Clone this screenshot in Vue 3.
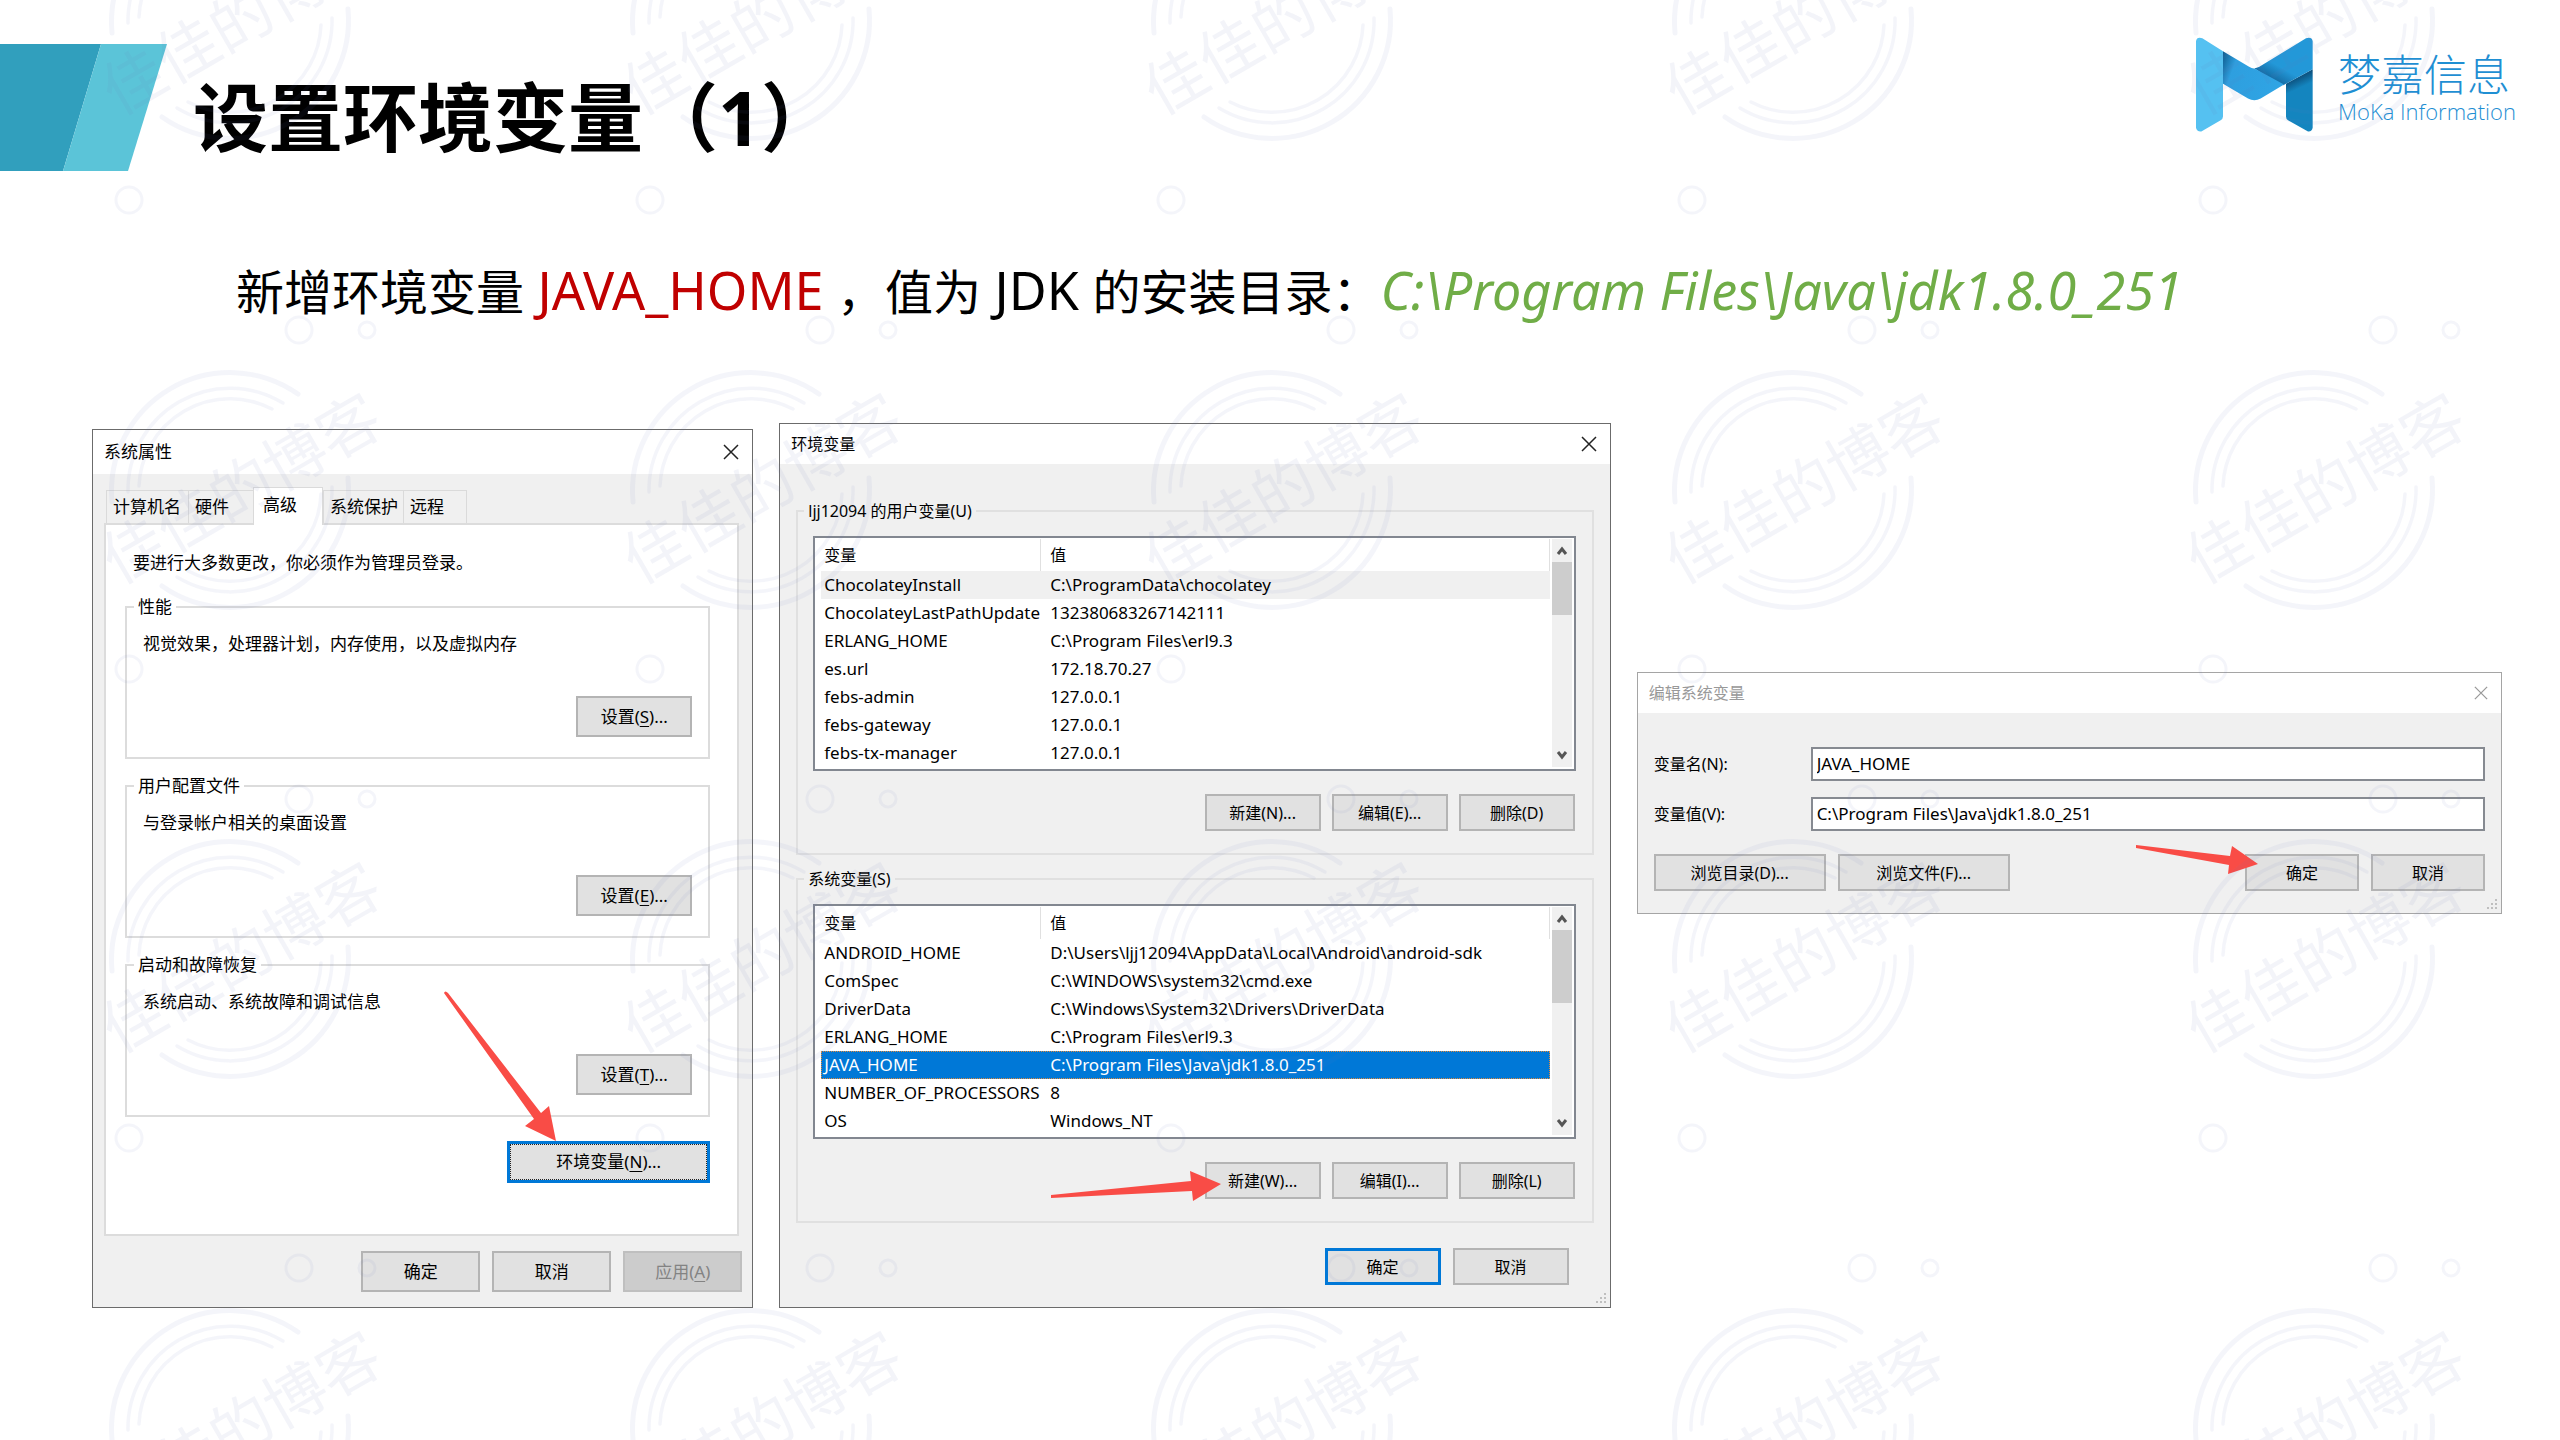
<script setup>
const tabs = [
  { name: '计算机名', width: 82 },
  { name: '硬件', width: 65 },
  { name: '高级', width: 70, active: true },
  { name: '系统保护', width: 80 },
  { name: '远程', width: 64 },
]

const groups = [
  { title: '性能', text: '视觉效果，处理器计划，内存使用，以及虚拟内存', key: 'S' },
  { title: '用户配置文件', text: '与登录帐户相关的桌面设置', key: 'E' },
  { title: '启动和故障恢复', text: '系统启动、系统故障和调试信息', key: 'T' },
]

const lists = [
  {
    title: 'ljj12094 的用户变量(U)',
    thumb: 53,
    highlighted: 'ChocolateyInstall',
    rows: [
      ['ChocolateyInstall', 'C:\\ProgramData\\chocolatey'],
      ['ChocolateyLastPathUpdate', '132380683267142111'],
      ['ERLANG_HOME', 'C:\\Program Files\\erl9.3'],
      ['es.url', '172.18.70.27'],
      ['febs-admin', '127.0.0.1'],
      ['febs-gateway', '127.0.0.1'],
      ['febs-tx-manager', '127.0.0.1'],
    ],
    buttons: ['新建(N)...', '编辑(E)...', '删除(D)'],
  },
  {
    title: '系统变量(S)',
    thumb: 73,
    selected: 'JAVA_HOME',
    arrow: true,
    rows: [
      ['ANDROID_HOME', 'D:\\Users\\ljj12094\\AppData\\Local\\Android\\android-sdk'],
      ['ComSpec', 'C:\\WINDOWS\\system32\\cmd.exe'],
      ['DriverData', 'C:\\Windows\\System32\\Drivers\\DriverData'],
      ['ERLANG_HOME', 'C:\\Program Files\\erl9.3'],
      ['JAVA_HOME', 'C:\\Program Files\\Java\\jdk1.8.0_251'],
      ['NUMBER_OF_PROCESSORS', '8'],
      ['OS', 'Windows_NT'],
    ],
    buttons: ['新建(W)...', '编辑(I)...', '删除(L)'],
  },
]
</script>

<template>
  <main class="slide">
    <header class="head">
      <svg class="ribbon" width="167" height="128" viewBox="0 0 167 128" aria-hidden="true">
        <path d="M0 0H101L63 127H0Z" fill="#319fbd" />
        <path d="M101 0H167L128 127H63Z" fill="#5bc4d8" />
      </svg>
      <h1 class="title">设置环境变量（1）</h1>
      <div class="brand">
        <svg class="mark" width="117" height="95" viewBox="168 112 351 284" aria-hidden="true">
          <defs>
            <linearGradient id="shadeLeft" x1="0" x2="1" y1="0" y2="0.3">
              <stop offset="0" stop-color="#0e5a8c" />
              <stop offset="0.25" stop-color="#2e9fdf" />
              <stop offset="1" stop-color="#2fa4e4" />
            </linearGradient>
            <linearGradient id="shadeMid" gradientUnits="userSpaceOnUse" x1="375" y1="235" x2="400" y2="190">
              <stop offset="0" stop-color="#12649b" />
              <stop offset="1" stop-color="#2398d8" />
            </linearGradient>
            <linearGradient id="shadeRight" gradientUnits="userSpaceOnUse" x1="470" y1="232" x2="484" y2="262">
              <stop offset="0" stop-color="#0c4f7c" />
              <stop offset="1" stop-color="#1485bf" />
            </linearGradient>
          </defs>
          <path d="M438 252L518 208V384Q516 396 504 395L444 361Q438 358 438 350Z" fill="url(#shadeRight)" />
          <path d="M343 205Q350 205 358 201L498 115Q516 110 518 124V208L430 256L400 245Z" fill="url(#shadeMid)" />
          <path d="M249 154L326 200Q334 205 345 207L432 254L362 296Q343 307 324 296L249 252Z" fill="url(#shadeLeft)" />
          <path d="M168 124Q170 110 187 115L249 154V350Q249 357 242 361L184 395Q170 396 168 384Z" fill="#55c1f1" />
        </svg>
        <div class="brand-text">
          <span class="brand-cn">梦嘉信息</span>
          <span class="brand-en">MoKa Information</span>
        </div>
      </div>
    </header>

    <p class="lead">新增环境变量<span class="latin red"> JAVA_HOME </span>，值为<span class="latin"> JDK </span>的安装目录：<em class="latin green">C:\Program Files\Java\jdk1.8.0_251</em></p>

    <div class="windows">
      <section class="window props">
        <div class="bar">
          <span>系统属性</span>
          <button class="close" aria-label="关闭"><svg width="16" height="16" viewBox="0 0 16 16"><path d="M1 1L15 15M15 1L1 15" /></svg></button>
        </div>
        <div class="tabs" role="tablist">
          <button
            v-for="t in tabs"
            :key="t.name"
            class="tab"
            :class="{ active: t.active }"
            role="tab"
            :style="{ width: t.width + 'px' }"
          >{{ t.name }}</button>
        </div>
        <div class="panel">
          <p class="note">要进行大多数更改，你必须作为管理员登录。</p>
          <fieldset v-for="g in groups" :key="g.title" class="group">
            <legend>{{ g.title }}</legend>
            <p>{{ g.text }}</p>
            <button class="btn">设置(<u>{{ g.key }}</u>)...</button>
          </fieldset>
          <div class="env">
            <button class="btn focus">环境变量(<u>N</u>)...</button>
            <svg class="arrow arrow-env" width="116" height="154" viewBox="0 0 116 154" aria-hidden="true">
              <path d="M2 4Q3 1 6 4L99 124L107 117L114 152L83 137L92 130Z" />
            </svg>
          </div>
        </div>
        <div class="actions">
          <button class="btn">确定</button>
          <button class="btn">取消</button>
          <button class="btn" disabled>应用(<u>A</u>)</button>
        </div>
      </section>

      <section class="window vars">
        <div class="bar">
          <span>环境变量</span>
          <button class="close" aria-label="关闭"><svg width="16" height="16" viewBox="0 0 16 16"><path d="M1 1L15 15M15 1L1 15" /></svg></button>
        </div>
        <div class="body">
          <fieldset v-for="l in lists" :key="l.title" class="var-group">
            <legend>{{ l.title }}</legend>
            <div class="listbox">
              <table>
                <thead>
                  <tr><th class="name">变量</th><th>值</th></tr>
                </thead>
                <tbody>
                  <tr
                    v-for="r in l.rows"
                    :key="r[0]"
                    :class="{ hot: r[0] === l.highlighted, selected: r[0] === l.selected }"
                  >
                    <td>{{ r[0] }}</td><td>{{ r[1] }}</td>
                  </tr>
                </tbody>
              </table>
              <div class="scroll">
                <svg width="12" height="10" viewBox="0 0 12 10"><path d="M2 8L6 3L10 8" /></svg>
                <div class="thumb" :style="{ height: l.thumb + 'px' }"></div>
                <svg width="12" height="10" viewBox="0 0 12 10"><path d="M2 2L6 7L10 2" /></svg>
              </div>
            </div>
            <div class="row-buttons">
              <button v-for="b in l.buttons" :key="b" class="btn">{{ b }}</button>
              <svg v-if="l.arrow" class="arrow arrow-new" width="172" height="32" viewBox="0 0 172 32" aria-hidden="true">
                <path d="M1 25L141 11L140 1L171 14L143 31L142 21L1 28Z" />
              </svg>
            </div>
          </fieldset>
          <div class="confirm">
            <button class="btn primary">确定</button>
            <button class="btn">取消</button>
          </div>
        </div>
        <svg class="grip" width="12" height="12" viewBox="0 0 12 12" aria-hidden="true"><path d="M9 0h2v2h-2zM5 4h2v2h-2zM9 4h2v2h-2zM1 8h2v2h-2zM5 8h2v2h-2zM9 8h2v2h-2z" /></svg>
      </section>

      <section class="window edit">
        <div class="bar">
          <span>编辑系统变量</span>
          <button class="close" aria-label="关闭"><svg width="14" height="14" viewBox="0 0 16 16"><path d="M1 1L15 15M15 1L1 15" /></svg></button>
        </div>
        <div class="body">
          <div class="field">
            <label for="varName">变量名(N):</label>
            <input id="varName" type="text" value="JAVA_HOME" />
          </div>
          <div class="field">
            <label for="varValue">变量值(V):</label>
            <input id="varValue" type="text" value="C:\Program Files\Java\jdk1.8.0_251" />
          </div>
          <div class="edit-buttons">
            <button class="btn wide">浏览目录(D)...</button>
            <button class="btn wide">浏览文件(F)...</button>
            <div class="ok">
              <button class="btn">确定</button>
              <svg class="arrow arrow-ok" width="124" height="31" viewBox="0 0 124 31" aria-hidden="true">
                <path d="M1 1L95 12L97 2L123 20L93 30L94 21L1 4Z" />
              </svg>
            </div>
            <button class="btn">取消</button>
          </div>
        </div>
        <svg class="grip" width="12" height="12" viewBox="0 0 12 12" aria-hidden="true"><path d="M9 0h2v2h-2zM5 4h2v2h-2zM9 4h2v2h-2zM1 8h2v2h-2zM5 8h2v2h-2zM9 8h2v2h-2z" /></svg>
      </section>
    </div>

    <svg class="watermark" aria-hidden="true">
      <defs>
        <pattern id="stamp" patternUnits="userSpaceOnUse" x="0" y="-200" width="521" height="469">
          <g class="ink" transform="translate(230 221)">
            <path stroke-width="5" d="M-118 12A118.500 118.500 0 0 1 68 -96M118 -12A118.500 118.500 0 0 1 -68 96" />
            <path stroke-width="3.500" d="M-102 2A102 102 0 0 1 53 -87M102 -3A102 102 0 0 1 -53 87" />
            <path stroke-width="3.500" d="M-91 -4A91 91 0 0 1 42 -81M91 4A91 91 0 0 1 -42 81" />
            <text transform="translate(11 -2) rotate(-30)" text-anchor="middle" y="23">佳佳的博客</text>
          </g>
          <g class="ink">
            <circle cx="129" cy="400" r="13" stroke-width="3" />
            <circle cx="299" cy="61" r="13" stroke-width="3" />
            <circle cx="367" cy="61" r="8" stroke-width="3" />
          </g>
        </pattern>
      </defs>
      <rect width="100%" height="100%" fill="url(#stamp)" />
    </svg>
  </main>
</template>

<style>
body {
  margin: 0;
  background: #fff;
}
</style>

<style scoped>
.slide {
  position: relative;
  box-sizing: border-box;
  min-height: 100vh;
  padding-bottom: 60px;
  overflow: hidden;
  color: #000;
  font-family: "Noto Sans", "Noto Sans CJK SC", sans-serif;
}

.head {
  display: flex;
  align-items: flex-start;
  height: 214px;
  padding-right: 44px;
}

.ribbon {
  flex: none;
  margin-top: 44px;
}

.title {
  margin: 42px 0 0 26px;
  font-size: 75px;
  line-height: 150px;
  font-weight: 700;
  white-space: nowrap;
}

.brand {
  display: flex;
  gap: 25px;
  margin: 37px 0 0 auto;
  color: #1f8fd3;
}

.brand-text {
  display: flex;
  flex-direction: column;
  padding-top: 10px;
  white-space: nowrap;
}

.brand-cn {
  font-family: "Noto Sans CJK SC", sans-serif;
  font-size: 43px;
  line-height: 50px;
  font-weight: 300;
}

.brand-en {
  font-family: "Open Sans", sans-serif;
  font-size: 22px;
  line-height: 28px;
  font-weight: 300;
}

.lead {
  margin: 39px 0 0;
  padding-left: 236px;
  height: 72px;
  font-family: "Noto Sans CJK SC", sans-serif;
  font-size: 48px;
  line-height: 72px;
  white-space: nowrap;
}

.latin {
  font-family: "Noto Sans", sans-serif;
  font-size: 52px;
  line-height: 1;
}

.red {
  color: #c00000;
}

.green {
  color: #70ad47;
}

.windows {
  display: grid;
  grid-template-columns: 661fr 831fr 865fr;
  gap: 26px;
  align-items: start;
  margin-top: 98px;
  padding: 0 58px 0 92px;
  font-size: 16px;
  line-height: 24px;
}

.window {
  position: relative;
  border: 1px solid #6b6b6b;
  background: #f0f0f0;
  min-width: 0;
}

.bar {
  display: flex;
  align-items: center;
  justify-content: space-between;
  height: 40px;
  padding: 0 13px 0 11px;
  background: #fff;
}

.close {
  display: flex;
  padding: 0;
  border: 0;
  background: none;
}

.close path {
  fill: none;
  stroke: #222;
  stroke-width: 1.5;
}

.btn {
  box-sizing: border-box;
  width: 116px;
  height: 37px;
  padding: 0;
  border: 2px solid #b4b4b4;
  background: #e1e1e1;
  color: #000;
  font: inherit;
  white-space: nowrap;
}

.btn:disabled {
  border-color: #bfbfbf;
  background: #ccc;
  color: #838383;
}

.btn u {
  text-underline-offset: 3px;
}

.arrow {
  position: absolute;
  pointer-events: none;
}

.arrow path {
  fill: #f94c46;
}

.props {
  margin-top: 6px;
  font-size: 17px;
}

.props .bar {
  height: 44px;
}

.tabs {
  display: flex;
  align-items: flex-end;
  margin: 13px 13px 0;
  height: 36px;
}

.tab {
  box-sizing: border-box;
  height: 33px;
  padding: 0 0 0 6px;
  border: 1px solid #dadada;
  border-bottom: 0;
  border-right-width: 0;
  background: #f0f0f0;
  font: inherit;
  text-align: left;
  color: #000;
}

.tab:last-child {
  border-right-width: 1px;
}

.tab.active {
  position: relative;
  height: 38px;
  margin-bottom: -2px;
  padding: 0 0 4px 9px;
  border-right-width: 1px;
  background: #fff;
}

.panel {
  display: flex;
  flex-direction: column;
  margin: 0 13px 0 11px;
  padding: 26px 27px 51px 19px;
  border: 2px solid #dcdcdc;
  background: #fff;
}

.note {
  margin: 0 0 5px 8px;
}

.group {
  display: flex;
  flex-direction: column;
  margin: 15px 0 0;
  padding: 13px 16px 20px;
  border: 2px solid #dcdcdc;
}

.group legend {
  margin-left: -9px;
  padding: 0 4px;
}

.group p {
  margin: 0;
}

.group .btn {
  align-self: flex-end;
  height: 41px;
  margin-top: 40px;
}

.env {
  position: relative;
  align-self: flex-end;
  margin-top: 24px;
}

.btn.focus {
  display: block;
  width: 203px;
  height: 42px;
  border: 3px solid #0078d7;
  outline: 1px dotted #222;
  outline-offset: -4px;
}

.arrow-env {
  left: -65px;
  top: -152px;
}

.actions {
  display: flex;
  justify-content: flex-end;
  gap: 12px;
  padding: 15px 10px 15px;
}

.actions .btn {
  width: 119px;
  height: 41px;
}

.vars .body {
  padding: 35px 16px 22px;
}

.var-group {
  margin: 0 0 12px;
  padding: 13px 16px 22px 15px;
  border: 2px solid #e0e0e0;
  min-width: 0;
}

.var-group legend {
  margin-left: -9px;
  padding: 0 4px;
}

.listbox {
  display: flex;
  padding: 1px 2px 2px 6px;
  border: 2px solid #828790;
  background: #fff;
}

table {
  flex: 1;
  border-collapse: collapse;
  table-layout: fixed;
  min-width: 0;
}

th,
td {
  height: 28px;
  padding: 0 0 0 9px;
  text-align: left;
  font-weight: 400;
  white-space: nowrap;
}

td {
  font-size: 17px;
}

th:first-child,
td:first-child {
  padding-left: 3px;
}

th {
  height: 32px;
  box-shadow: inset -1px 0 #e0e0e0;
}

.name {
  width: 217px;
}

.hot {
  background: #f0f0f0;
}

.selected {
  background: #0078d7;
  color: #fff;
  outline: 1px dotted #e28a3c;
  outline-offset: -1px;
}

.scroll {
  display: flex;
  flex-direction: column;
  align-items: center;
  width: 20px;
  margin-left: 2px;
  padding: 7px 0;
  background: #f0f0f0;
}

.scroll path {
  fill: none;
  stroke: #555;
  stroke-width: 3;
}

.thumb {
  align-self: stretch;
  margin: 6px 0 auto;
  background: #cdcdcd;
}

.row-buttons {
  position: relative;
  display: flex;
  justify-content: flex-end;
  gap: 11px;
  margin-top: 23px;
  padding-right: 1px;
}

.arrow-new {
  right: 354px;
  top: 8px;
}

.confirm {
  display: flex;
  justify-content: flex-end;
  gap: 12px;
  margin-top: 25px;
  padding-right: 25px;
}

.btn.primary {
  border: 3px solid #0078d7;
}

.grip {
  position: absolute;
  right: 3px;
  bottom: 2px;
  fill: #bfbfbf;
}

.edit {
  margin-top: 249px;
  border-color: #a5a5a5;
}

.edit .bar {
  color: #999;
}

.edit .close path {
  stroke: #999;
}

.edit .body {
  padding: 34px 16px 22px;
}

.field {
  display: grid;
  grid-template-columns: 157px 1fr;
  align-items: center;
  margin-bottom: 16px;
}

.field input {
  box-sizing: border-box;
  height: 34px;
  min-width: 0;
  padding: 0 4px 2px;
  border: 2px solid #868a91;
  background: #fff;
  color: #000;
  font: inherit;
  font-size: 17px;
}

.edit-buttons {
  display: flex;
  gap: 12px;
  margin-top: 23px;
}

.edit-buttons .btn {
  width: 114px;
}

.edit-buttons .wide {
  width: 172px;
}

.ok {
  position: relative;
  display: flex;
  margin-left: auto;
}

.arrow-ok {
  left: -110px;
  top: -10px;
}

.watermark {
  position: absolute;
  inset: 0;
  width: 100%;
  height: 100%;
  pointer-events: none;
}

.ink {
  fill: none;
  stroke: rgb(98 112 184 / 0.07);
  stroke-linecap: round;
}

.ink text {
  fill: rgb(98 112 184 / 0.08);
  stroke: none;
  font-family: "Noto Sans CJK SC", sans-serif;
  font-size: 62px;
}
</style>
